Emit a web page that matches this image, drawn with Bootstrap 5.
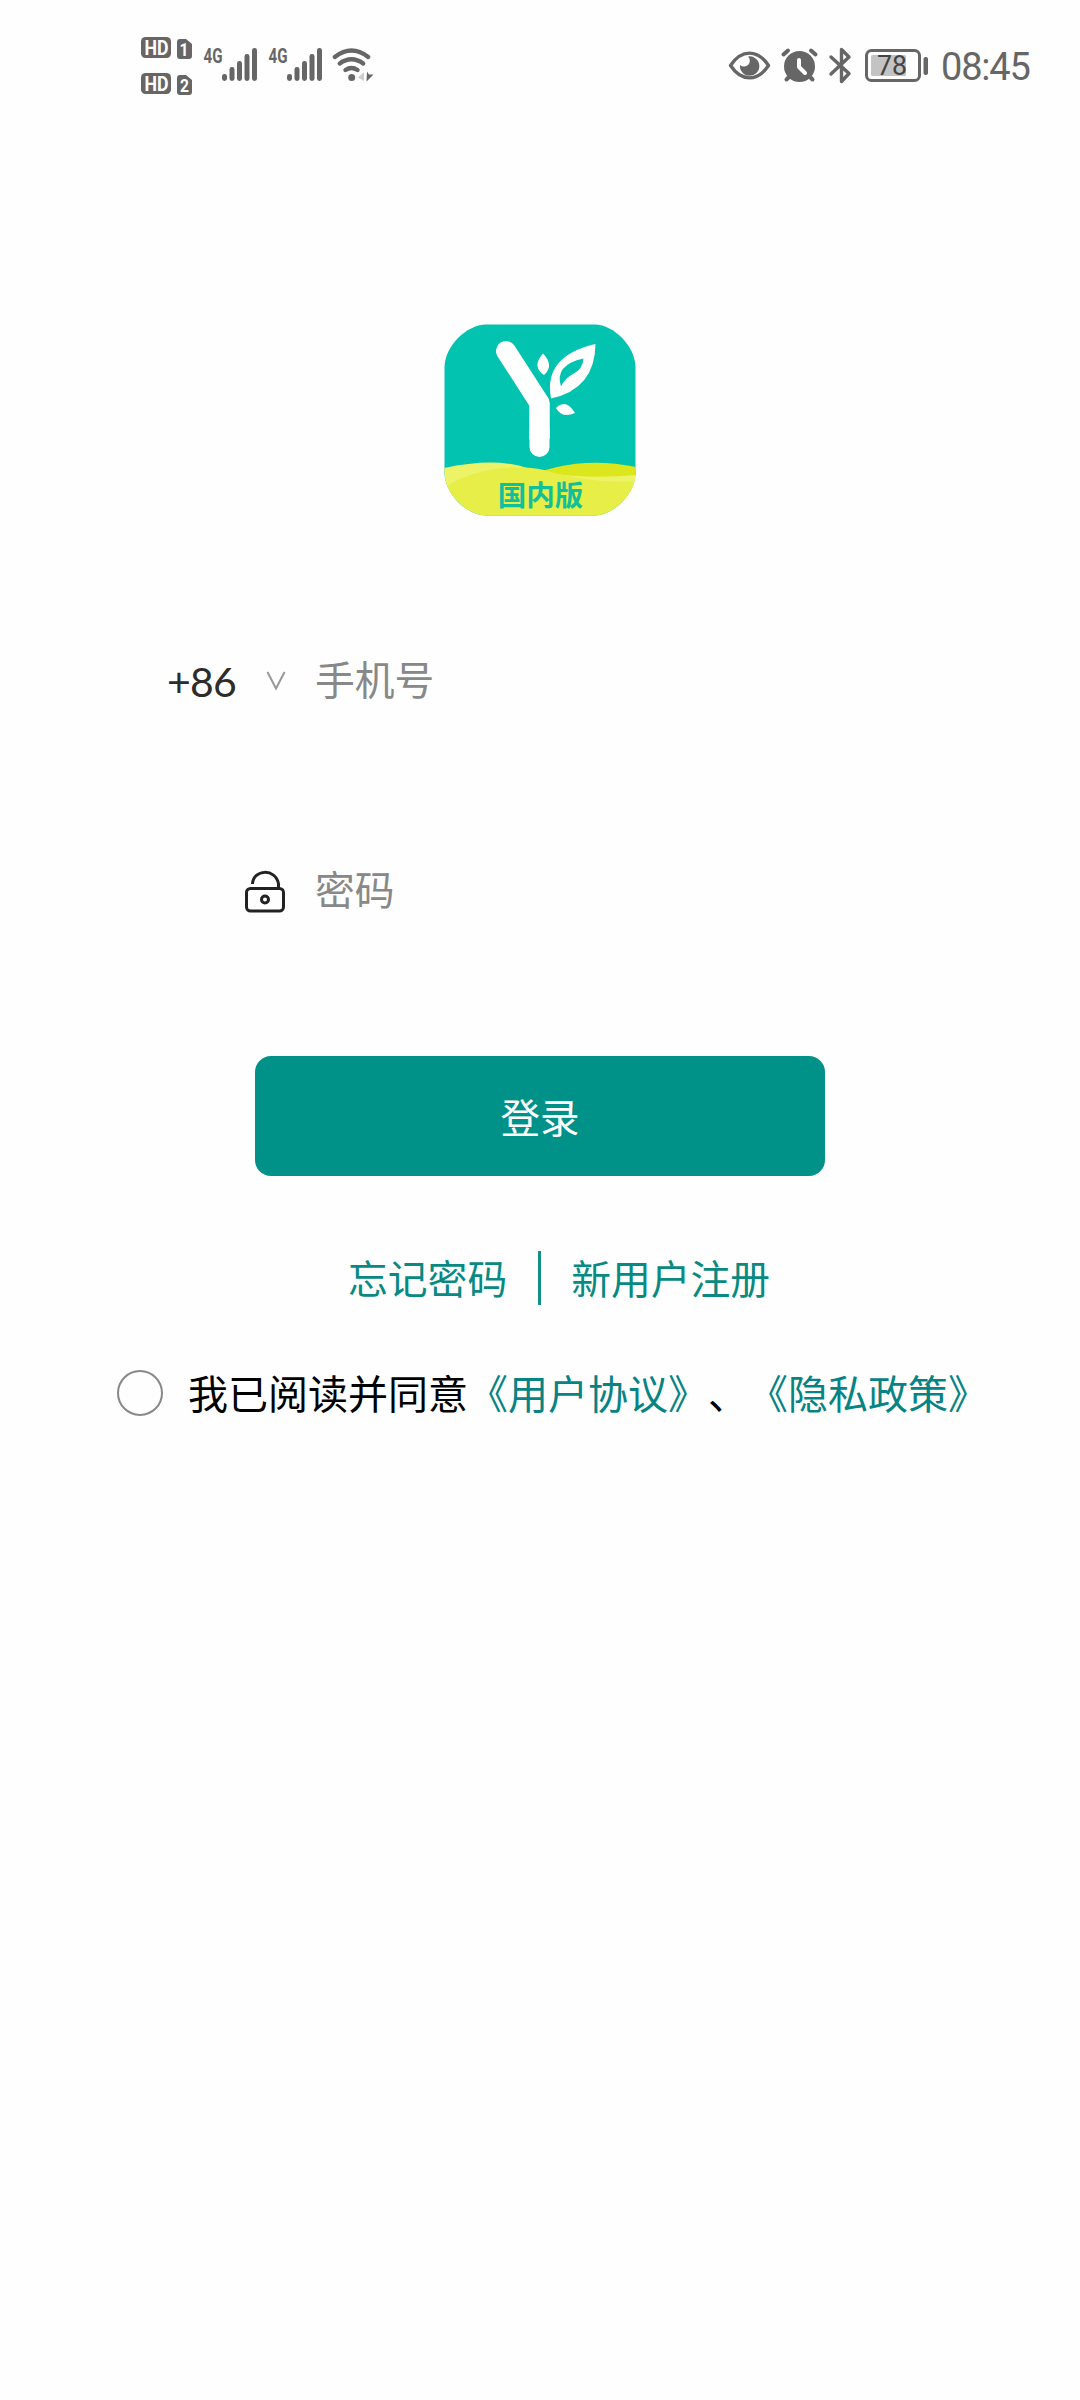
<!DOCTYPE html>
<html lang="zh-CN">
<head>
<meta charset="utf-8">
<meta name="viewport" content="width=device-width, initial-scale=1">
<title>登录</title>
<link href="https://cdn.jsdelivr.net/npm/bootstrap@5.3.0/dist/css/bootstrap.min.css" rel="stylesheet">
<style>
body{background:#fefefe;font-family:"Liberation Sans","Noto Sans CJK SC",sans-serif;font-size:40px;line-height:60px;color:#000;min-height:2400px}
svg{display:block;flex:none}
.status-bar{height:130px;padding:20px 0 0 120px}
.status-gap{width:320px}
.clock{font-family:Roboto,sans-serif;font-weight:400;font-size:38px;line-height:90px;color:#666;width:100px;height:90px;margin-left:-109px;letter-spacing:-1.2px;white-space:nowrap;padding-top:2px}
.app-logo{margin:180px auto 0 430px}
.line-form{height:90px}
.phone-line{margin-top:106px;padding-left:150px}
.pass-line{margin-top:120px;padding-left:220px}
.prefix{font-family:Lato,sans-serif;font-size:41px;letter-spacing:-.8px;color:#2c2c2c;width:100px;padding:4px 0 0 17px;line-height:60px;height:67px}
.hint{color:#888;padding:0;border:0;background:transparent;font-size:39.8px;line-height:60px;width:500px;box-shadow:none}
.hint::placeholder{color:#888;opacity:1}
.phone-line .hint{margin-left:15px}
.login-btn{width:570px;height:120px;margin:120px 0 0 255px;background:#009288;border:0;border-radius:16px;font-size:39.5px;color:#fff;padding:7px 0 0}
.link-line{height:54px;margin-top:75px;padding-left:348px}
.link-line a{color:#088a83;font-size:39.8px;line-height:58px;white-space:nowrap}
.divide{width:3px;height:54px;background:#129087;margin:0 30px 0 31px}
.agree{margin-top:58px;padding-left:117px;height:60px;white-space:nowrap}
.agree-text{padding-top:4px;font-kerning:none;font-feature-settings:"chws" 0,"halt" 0,"palt" 0,"kern" 0;text-spacing-trim:space-all}
.agree a{color:#078384}
.agree input{appearance:none;width:46px;height:46px;border:2px solid #888;border-radius:50%;margin:0 25px 0 0;background:transparent;flex:none}
</style>
<script src="https://cdn.jsdelivr.net/npm/bootstrap@5.3.0/dist/js/bootstrap.bundle.min.js"></script>
</head>
<body class="d-flex flex-column">
<header class="status-bar d-flex">
<svg width="270" height="90" viewBox="0 0 270 90" fill="#666" font-family="Roboto,sans-serif" font-weight="700">
<rect x="21" y="17" width="30" height="21" rx="4.5"/><rect x="21" y="53" width="30" height="21" rx="4.5"/>
<path d="M60 19h6l6 5v12q0 3-3 3h-9q-3 0-3-3V22q0-3 3-3zM60 55h6l6 5v12q0 3-3 3h-9q-3 0-3-3V58q0-3 3-3z"/>
<g fill="#fff" font-size="20"><text x="24.500" y="34.500" textLength="24" lengthAdjust="spacingAndGlyphs">HD</text><text x="24.500" y="70.500" textLength="24" lengthAdjust="spacingAndGlyphs">HD</text>
<text x="59.500" y="36" font-size="18" textLength="9" lengthAdjust="spacingAndGlyphs">1</text><text x="60" y="72" font-size="18" textLength="9" lengthAdjust="spacingAndGlyphs">2</text></g>
<g font-size="20" font-weight="700"><text x="83.500" y="43" textLength="19" lengthAdjust="spacingAndGlyphs">4G</text><text x="148.500" y="43" textLength="19" lengthAdjust="spacingAndGlyphs">4G</text></g>
<g id="bars"><rect x="102" y="54" width="5" height="7" rx="2.400"/><rect x="109.500" y="47" width="5" height="14" rx="2.400"/><rect x="117" y="41" width="5" height="20" rx="2.400"/><rect x="124.500" y="34" width="5" height="27" rx="2.400"/><rect x="132" y="28" width="5" height="33" rx="2.400"/></g>
<use href="#bars" x="65"/>
<g fill="none" stroke="#666" stroke-width="4.400" stroke-linecap="round"><path d="M214.800 37q16.700-13 33.400 0M219.800 43.500q11.700-8.400 23.400 0M225.500 50q6-4 12 0"/></g>
<circle cx="231.700" cy="57.500" r="3.500"/><path fill="#ccc" d="M244 52v9l-6-3.500z"/><path d="M247 51.500l2 3h4.500l-7 7z"/>
</svg>
<div class="status-gap"></div>
<svg width="340" height="90" viewBox="0 0 340 90" fill="none" stroke="#666" stroke-width="3">
<path d="M20.500 45.500c11-16.500 27-16.500 38 0c-11 16.500-27 16.500-38 0z" stroke-width="3.400" stroke-linejoin="round"/><path fill="#666" stroke="none" d="M38 36.500a9.700 9.700 0 1 1-8 8.500a5 5 0 0 0 8-8.500z"/>
<circle cx="89.500" cy="46.500" r="15.500" fill="#666" stroke="none"/><path d="M73.500 34.500l4.500-4M105.500 34.500l-4.500-4M76.500 59.500l3-3M102.500 59.500l-3-3" stroke-width="4" stroke-linecap="round"/><path d="M89 40v7l6 6" stroke="#fff" stroke-width="4" stroke-linecap="round" stroke-linejoin="round"/>
<path d="M121 37l18 16.500-7.500 8V29.500l7.500 7.500-18 17" stroke-width="3.400" stroke-linecap="round" stroke-linejoin="round"/>
<rect x="156.500" y="30.500" width="53" height="30" rx="5"/><rect x="161" y="35" width="35" height="21" rx="1.500" fill="#c3c3c3" stroke="none"/><rect x="213.500" y="37" width="4.500" height="18" rx="2" fill="#666" stroke="none"/>
<text x="167" y="55.300" font-family="Roboto,sans-serif" font-size="27" textLength="30" lengthAdjust="spacingAndGlyphs" fill="#444" stroke="none">78</text>
</svg>
<div class="clock">08:45</div>
</header>
<svg class="app-logo" width="220" height="220" viewBox="0 0 220 220">
<defs><clipPath id="tile"><path d="M56 14.500H165C184 15 205 36 205.500 57V163C205 184 184 205 165 205.500H56C36 205 15 184 14.500 163V57C15 36 36 15 56 14.500z"/></clipPath></defs>
<g clip-path="url(#tile)"><path fill="#02c2b0" d="M14 14h192v192H14z"/>
<path fill="#dbe61c" d="M90 170Q144 144 206 157V186H90z"/>
<path fill="#edf367" d="M14 158Q65 147 97 158Q115 164 145 166Q176 168 206 165V190H14z"/>
<path fill="#e7ee47" d="M14 178C40 160 82 153 114 160C145 169 175 173 206 171V206H14z"/></g>
<path d="M76 41L109.500 93V127" fill="none" stroke="#fff" stroke-width="20" stroke-linecap="round" stroke-linejoin="round"/><path d="M109.500 93V147" fill="none"/><path d="M109.500 93V127.300" fill="none" stroke="#fff" stroke-width="20" stroke-linecap="round"/><path d="M109.500 120V137" fill="none" stroke="#fff" stroke-width="20" stroke-linecap="round"/>
<path fill="#fff" d="M113 43.500C121 52 121 59 114 65C106 60 105 52 113 43.500zM126 98Q136 88 145 103Q132 109 126 98z"/>
<path fill="#fff" fill-rule="evenodd" d="M165.500 34Q165 79 121 88.500Q113 46 165.500 34zM153.500 48.500Q124 55 131 76.500Q135 68 143 64Q153 59 153.500 48.500z"/>
<text x="110.500" y="195.500" text-anchor="middle" font-family="Noto Sans CJK SC,sans-serif" font-weight="700" font-size="28.500" fill="#10c09a">国内版</text>
</svg>
<main>
<div class="phone-line line-form d-flex align-items-center">
<div class="prefix">+86</div>
<svg width="50" height="60"><path d="M17.500 21l8.500 16.500 8.500-16.500" fill="none" stroke="#999" stroke-width="2"/></svg>
<input class="hint form-control" type="tel" placeholder="手机号" aria-label="手机号">
</div>
<div class="pass-line line-form d-flex align-items-center">
<svg width="95" height="80" fill="none" stroke="#222" stroke-width="3"><rect x="26.500" y="37.500" width="37" height="22.500" rx="4"/><path d="M32.500 33C33 18 56 17 58.500 33v4"/><circle cx="45" cy="48.500" r="3.500"/></svg>
<input class="hint form-control" type="password" placeholder="密码" aria-label="密码">
</div>
<button class="btn login-btn d-block" type="button">登录</button>
<nav class="link-line d-flex"><a class="text-decoration-none" href="#">忘记密码</a><span class="divide"></span><a class="text-decoration-none" href="#">新用户注册</a></nav>
<div class="agree d-flex align-items-center"><input type="checkbox" aria-label="同意"><div class="agree-text">我已阅读并同意<a class="text-decoration-none" href="#">《用户协议》</a>、<a class="text-decoration-none" href="#">《隐私政策》</a></div></div>
</main>
</body>
</html>
